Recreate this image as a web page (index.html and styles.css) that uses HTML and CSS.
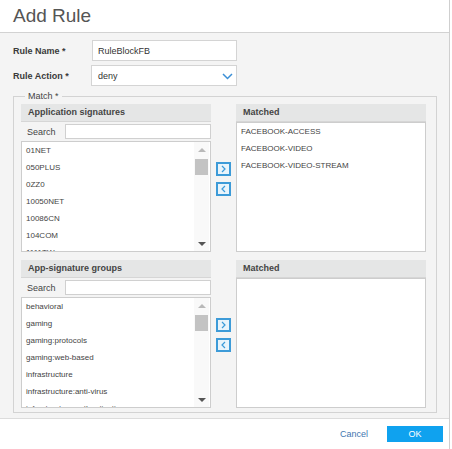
FILE: index.html
```html
<!DOCTYPE html>
<html lang="en">
<head>
    <meta charset="UTF-8">
    <meta name="viewport" content="width=device-width, initial-scale=1.0">
    <title>Add Rule</title>
    <link rel="stylesheet" href="styles.css">
</head>
<body>
    <div class="dialog">
        <div class="dialog-head">
            <h1>Add Rule</h1>
        </div>
        <div class="dialog-body">
            <div class="form-row">
                <label class="form-label">Rule Name *</label>
                <input class="text-input" type="text" value="RuleBlockFB">
            </div>
            <div class="form-row">
                <label class="form-label">Rule Action *</label>
                <div class="select-box">
                    <span>deny</span>
                    <svg class="chevron" width="11" height="7" viewBox="0 0 11 7"><polyline points="1,1 5.5,5.5 10,1" fill="none" stroke="#3b8fd6" stroke-width="1.5"/></svg>
                </div>
            </div>

            <fieldset class="match">
                <legend>Match *</legend>

                <div class="picker">
                    <div class="panel">
                        <div class="panel-title">Application signatures</div>
                        <div class="search-row">
                            <span>Search</span>
                            <input class="search-input" type="text">
                        </div>
                        <div class="list list-short">
                            <ul>
                                <li>01NET</li>
                                <li>050PLUS</li>
                                <li>0ZZ0</li>
                                <li>10050NET</li>
                                <li>10086CN</li>
                                <li>104COM</li>
                                <li>1111TW</li>
                            </ul>
                            <div class="scrollbar">
                                <span class="arrow-up"></span>
                                <span class="thumb"></span>
                                <span class="arrow-down"></span>
                            </div>
                        </div>
                    </div>
                    <div class="movers">
                        <button class="mover"><svg width="7" height="8" viewBox="0 0 7 8"><polyline points="2,1 5,4 2,7" fill="none" stroke="#3a9ad9" stroke-width="1.2"/></svg></button>
                        <button class="mover"><svg width="7" height="8" viewBox="0 0 7 8"><polyline points="5,1 2,4 5,7" fill="none" stroke="#3a9ad9" stroke-width="1.2"/></svg></button>
                    </div>
                    <div class="panel">
                        <div class="panel-title">Matched</div>
                        <div class="list list-tall">
                            <ul>
                                <li>FACEBOOK-ACCESS</li>
                                <li>FACEBOOK-VIDEO</li>
                                <li>FACEBOOK-VIDEO-STREAM</li>
                            </ul>
                        </div>
                    </div>
                </div>

                <div class="picker">
                    <div class="panel">
                        <div class="panel-title">App-signature groups</div>
                        <div class="search-row">
                            <span>Search</span>
                            <input class="search-input" type="text">
                        </div>
                        <div class="list list-short">
                            <ul>
                                <li>behavioral</li>
                                <li>gaming</li>
                                <li>gaming:protocols</li>
                                <li>gaming:web-based</li>
                                <li>infrastructure</li>
                                <li>infrastructure:anti-virus</li>
                                <li>infrastructure:authentication</li>
                            </ul>
                            <div class="scrollbar">
                                <span class="arrow-up"></span>
                                <span class="thumb"></span>
                                <span class="arrow-down"></span>
                            </div>
                        </div>
                    </div>
                    <div class="movers">
                        <button class="mover"><svg width="7" height="8" viewBox="0 0 7 8"><polyline points="2,1 5,4 2,7" fill="none" stroke="#3a9ad9" stroke-width="1.2"/></svg></button>
                        <button class="mover"><svg width="7" height="8" viewBox="0 0 7 8"><polyline points="5,1 2,4 5,7" fill="none" stroke="#3a9ad9" stroke-width="1.2"/></svg></button>
                    </div>
                    <div class="panel">
                        <div class="panel-title">Matched</div>
                        <div class="list list-tall">
                            <ul></ul>
                        </div>
                    </div>
                </div>
            </fieldset>
        </div>
        <div class="dialog-foot">
            <a class="cancel" href="#">Cancel</a>
            <button class="ok">OK</button>
        </div>
    </div>
</body>
</html>
```

FILE: styles.css
```css
body {
    margin: 0;
    background: #fff;
    font-family: 'Liberation Sans', Arial, sans-serif;
    color: #333;
}
.dialog {
    width: 449px;
    height: 449px;
    border-right: 1px solid #cfcfcf;
    display: flex;
    flex-direction: column;
}
.dialog-head {
    height: 32px;
    border-bottom: 1px solid #d2d2d2;
    padding-left: 13px;
}
.dialog-head h1 {
    margin: 0;
    font-size: 19px;
    font-weight: normal;
    line-height: 32px;
    color: #555;
}
.dialog-body {
    background: #f4f4f4;
    padding: 7px 12px 0 13px;
    height: 378px;
    border-bottom: 1px solid #dcdcdc;
}
.form-row {
    display: flex;
    align-items: center;
    margin-bottom: 4px;
}
.form-label {
    width: 79px;
    font-size: 9px;
    font-weight: bold;
    color: #3a3a3a;
}
.text-input {
    box-sizing: border-box;
    width: 145px;
    height: 21px;
    margin: 0;
    padding: 0 5px;
    border: 1px solid #d4d4d4;
    background: #fff;
    font-family: inherit;
    font-size: 9px;
    color: #333;
}
.select-box {
    box-sizing: border-box;
    width: 146px;
    height: 21px;
    margin-left: -1px;
    padding: 0 3px 0 6px;
    border: 1px solid #d4d4d4;
    background: #fff;
    display: flex;
    align-items: center;
    justify-content: space-between;
    font-size: 9px;
    color: #333;
}
.chevron {
    margin-top: 1px;
}

/* match fieldset with the two pickers */
.match {
    margin: 5px 0 0;
    padding: 3px 11px 4px 7px;
    border: 1px solid #d3d3d3;
    min-width: 0;
}
.match legend {
    margin-left: 4px;
    padding: 0 3px;
    font-size: 9px;
    line-height: 10px;
    color: #444;
}
.picker {
    display: flex;
    height: 148px;
}
.picker + .picker {
    margin-top: 8px;
}
.panel {
    display: flex;
    flex-direction: column;
    width: 190px;
    flex: none;
}
.panel-title {
    height: 17px;
    line-height: 17px;
    padding-left: 7px;
    background: #e5e6e6;
    border-bottom: 1px solid #d6d6d6;
    font-size: 9px;
    font-weight: bold;
    color: #444;
}
.search-row {
    display: flex;
    align-items: center;
    height: 19px;
    font-size: 9px;
    color: #444;
}
.search-row span {
    flex: none;
    width: 38px;
    padding-left: 6px;
}
.search-input {
    box-sizing: border-box;
    flex: 1;
    width: 0;
    min-width: 0;
    height: 15px;
    margin: 0;
    border: 1px solid #d0d0d0;
    background: #fff;
}
.list {
    box-sizing: border-box;
    border: 1px solid #cdcdcd;
    background: #fff;
    display: flex;
    overflow: hidden;
}
.list-short {
    height: 111px;
}
.list-tall {
    flex: 1;
}
.list ul {
    flex: 1;
    margin: 0;
    padding: 0 0 0 4px;
    list-style: none;
}
.list li {
    height: 17px;
    line-height: 17px;
    font-size: 8px;
    color: #444;
    white-space: nowrap;
}
.scrollbar {
    width: 15px;
    margin-right: 1px;
    background: #f9f9f9;
    display: flex;
    flex-direction: column;
    align-items: center;
}
.arrow-up {
    margin-top: 6px;
    border-left: 4px solid transparent;
    border-right: 4px solid transparent;
    border-bottom: 4px solid #b9b9b9;
}
.thumb {
    width: 13px;
    height: 16px;
    margin-top: 7px;
    background: #c3c3c3;
}
.arrow-down {
    margin-top: auto;
    margin-bottom: 5px;
    border-left: 4px solid transparent;
    border-right: 4px solid transparent;
    border-top: 4px solid #555;
}
.movers {
    width: 15px;
    margin: 0 5px;
    padding-top: 58px;
    display: flex;
    flex-direction: column;
    gap: 6px;
}
.mover {
    box-sizing: border-box;
    width: 15px;
    height: 14px;
    padding: 0;
    border: 2px solid #3d9bd8;
    background: #e9f4fb;
    display: flex;
    align-items: center;
    justify-content: center;
}

.dialog-foot {
    flex: 1;
    display: flex;
    align-items: center;
    justify-content: flex-end;
    padding-right: 6px;
}
.cancel {
    font-size: 9px;
    color: #4376b0;
    text-decoration: none;
    margin-right: 19px;
}
.ok {
    width: 56px;
    height: 16px;
    padding: 0;
    border: none;
    background: #0fa2ef;
    color: #fff;
    font-family: inherit;
    font-size: 9px;
}
```
